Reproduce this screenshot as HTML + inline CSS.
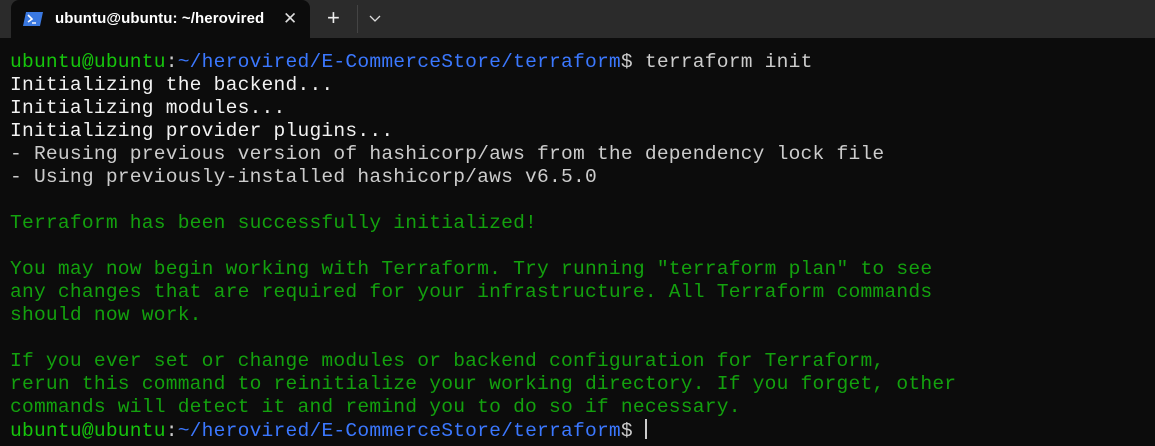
<!DOCTYPE html>
<html><head><style>
body{margin:0;width:1155px;height:446px;background:#0c0c0c;overflow:hidden;font-family:"Liberation Sans",sans-serif}
.bar{position:absolute;left:0;top:0;width:1155px;height:38px;background:#2b2b2b}
.tab{position:absolute;left:11px;top:0;width:299px;height:38px;background:#0c0c0c;border-radius:8px 8px 0 0}
.tab .t{position:absolute;left:44px;top:10px;color:#fff;font-size:15px;font-weight:bold;letter-spacing:0.1px}
.x{position:absolute;left:272px;top:9px;color:#ddd;font-size:17px}
.plus{position:absolute;left:327px;top:5px;color:#eee;font-size:22px}
.sep{position:absolute;left:357px;top:5px;width:1px;height:28px;background:#444}
pre{position:absolute;left:10px;top:51px;margin:0;font-family:"Liberation Mono",monospace;font-size:19.6px;letter-spacing:0.22px;line-height:23px;color:#cccccc}
.g{color:#13a10e}.gb{color:#16c60c}.b{color:#3b78ff}.w{color:#f2f2f2}
.cur{display:inline-block;width:2px;height:20px;background:#ccc;vertical-align:-3px}
</style></head><body>
<div class="bar"></div>
<div class="tab">
<svg style="position:absolute;left:12px;top:12px" width="20" height="14" viewBox="0 0 20 14"><polygon points="3,0 20,0 17,14 0,14" fill="#3a78e0"/><path d="M5 3 L9 7 L5 10" stroke="#fff" stroke-width="1.6" fill="none"/><path d="M9 11 H13" stroke="#fff" stroke-width="1.4"/></svg>
<div class="t">ubuntu@ubuntu: ~/herovired</div>
<div class="x">✕</div>
</div>
<div class="plus">+</div>
<div class="sep"></div>
<svg style="position:absolute;left:369px;top:15px" width="12" height="8" viewBox="0 0 12 8"><path d="M1 1 L6 6 L11 1" stroke="#ddd" stroke-width="1.3" fill="none"/></svg>
<pre><span class="gb">ubuntu@ubuntu</span>:<span class="b">~/herovired/E-CommerceStore/terraform</span>$ terraform init
<span class="w">Initializing the backend...</span>
<span class="w">Initializing modules...</span>
<span class="w">Initializing provider plugins...</span>
- Reusing previous version of hashicorp/aws from the dependency lock file
- Using previously-installed hashicorp/aws v6.5.0

<span class="g">Terraform has been successfully initialized!</span>

<span class="g">You may now begin working with Terraform. Try running "terraform plan" to see
any changes that are required for your infrastructure. All Terraform commands
should now work.</span>

<span class="g">If you ever set or change modules or backend configuration for Terraform,
rerun this command to reinitialize your working directory. If you forget, other
commands will detect it and remind you to do so if necessary.</span>
<span class="gb">ubuntu@ubuntu</span>:<span class="b">~/herovired/E-CommerceStore/terraform</span>$ <span class="cur"></span></pre>
</body></html>
